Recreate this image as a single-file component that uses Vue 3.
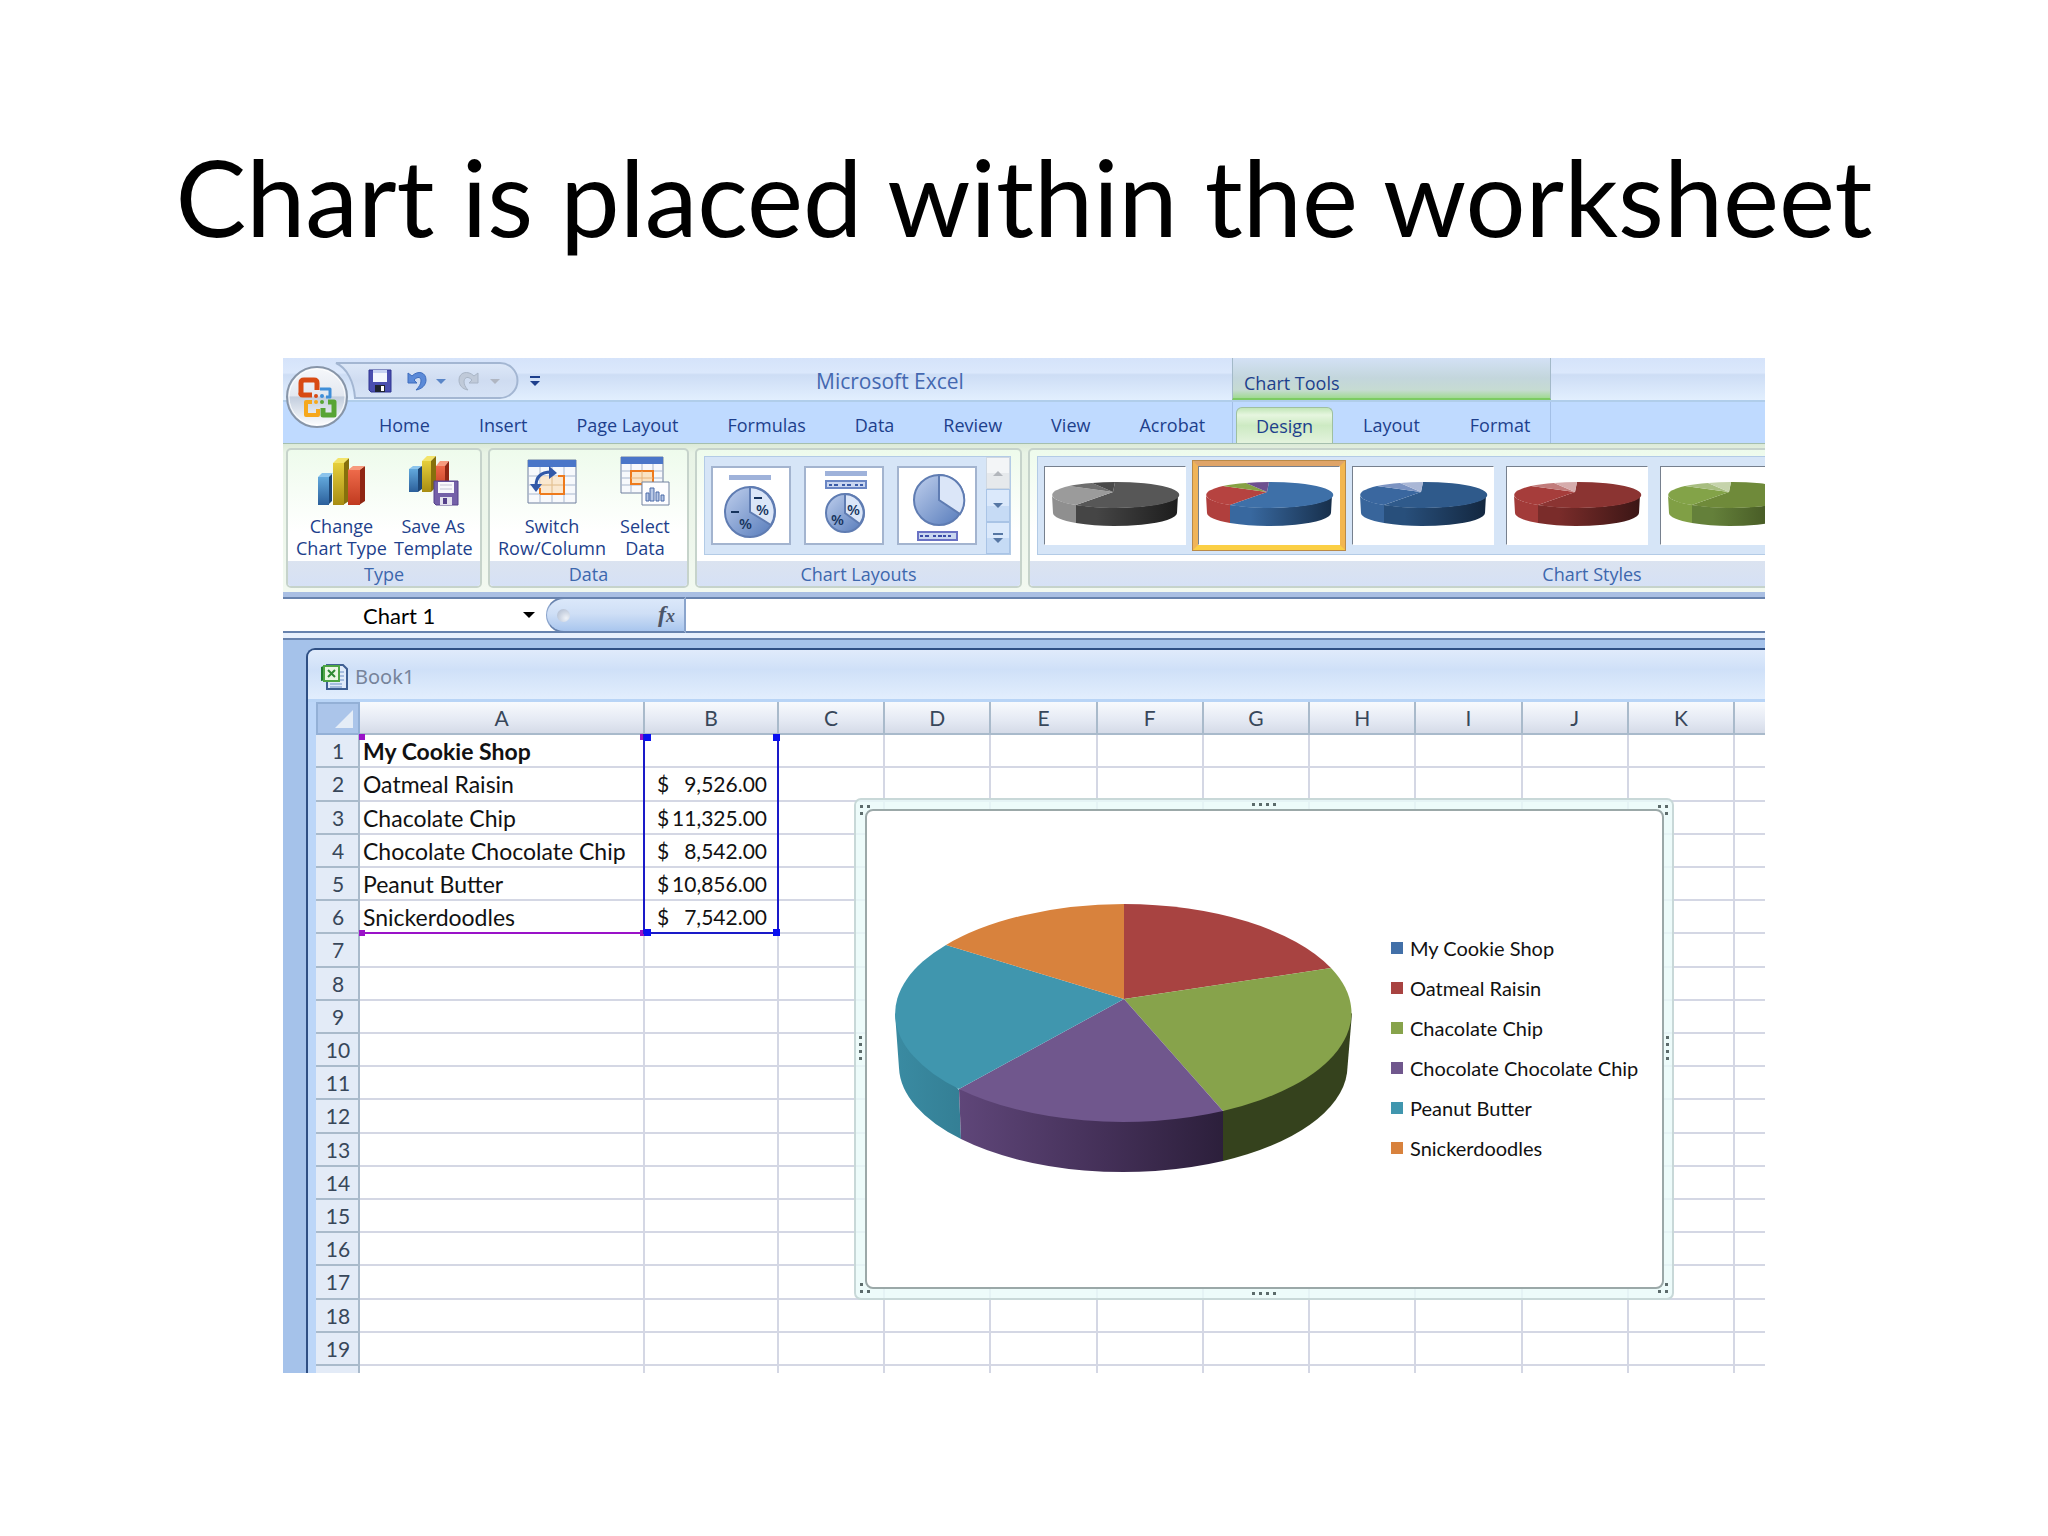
<script setup>
const mainTabs = ['Home', 'Insert', 'Page Layout', 'Formulas', 'Data', 'Review', 'View', 'Acrobat']
const chartTabs = ['Design', 'Layout', 'Format']

const styles = [
  { id: 'gray', faces: ['#575757', '#9b9b9b', '#6e6e6e', '#4a4a4a'], side: ['#454545', '#1d1d1d'], left: '#8f8f8f' },
  { id: 'multi', faces: ['#3e70a8', '#b64340', '#86a144', '#6d4f8f'], side: ['#38689f', '#172f4b'], left: '#b03f3d', selected: true },
  { id: 'blue', faces: ['#2f5a8b', '#3a679f', '#7b93c2', '#aab7d6'], side: ['#284f7b', '#13273f'], left: '#38659b' },
  { id: 'red', faces: ['#8b3432', '#a63d3b', '#c17c7b', '#d6acac'], side: ['#7a2c2a', '#3b1615'], left: '#a23b39' },
  { id: 'green', faces: ['#6f8a3a', '#83a348', '#a7bd80', '#c5d3ab'], side: ['#64803a', '#3a4a1c'], left: '#809f45' },
]

const columns = ['A', 'B', 'C', 'D', 'E', 'F', 'G', 'H', 'I', 'J', 'K', '']
const data = [
  ['My Cookie Shop', ''],
  ['Oatmeal Raisin', '9,526.00'],
  ['Chacolate Chip', '11,325.00'],
  ['Chocolate Chocolate Chip', '8,542.00'],
  ['Peanut Butter', '10,856.00'],
  ['Snickerdoodles', '7,542.00'],
]
const rows = Array.from({ length: 19 }, (_, i) => ({
  n: i + 1,
  label: data[i]?.[0] ?? '',
  amount: data[i]?.[1] ?? '',
}))

const legend = [
  { name: 'My Cookie Shop', color: '#4270a8' },
  { name: 'Oatmeal Raisin', color: '#a84341' },
  { name: 'Chacolate Chip', color: '#87a34b' },
  { name: 'Chocolate Chocolate Chip', color: '#70578d' },
  { name: 'Peanut Butter', color: '#4096ae' },
  { name: 'Snickerdoodles', color: '#d8823d' },
]
</script>

<template>
  <main class="slide">
    <h1>Chart is placed within the worksheet</h1>

    <section class="excel">
      <header class="titlebar">
        <div class="title-left">
          <div class="qat">
            <svg class="qat-shape" width="184" height="37" viewBox="0 0 184 37">
              <defs><linearGradient id="qa" x1="0" y1="0" x2="0" y2="1"><stop offset="0" stop-color="#dde8f8" /><stop offset=".5" stop-color="#cfdcf1" /><stop offset="1" stop-color="#d6e3f6" /></linearGradient></defs>
              <path d="M1 1H165A17 17 0 0 1 165 36H20C19 20 12 6 1 1z" fill="url(#qa)" stroke="#a3b6d2" stroke-width="2" />
            </svg>
            <button aria-label="Save">
              <svg width="24" height="24" viewBox="0 0 24 24"><path d="M1 1h22v22H3l-2-2z" fill="#4a4fb0" stroke="#2f3490" /><path d="M5 1h14v12H5z" fill="#f4f8ff" /><path d="M5 1h14v3H5z" fill="#c8d4f4" /><path d="M7 16h10v7H7z" fill="#1f2430" /><path d="M13 17h3v5h-3z" fill="#fff" /></svg>
            </button>
            <button class="undo" aria-label="Undo">
              <svg width="22" height="22" viewBox="0 0 22 22"><path d="M2 3v10h9L8 10c4-4 7-3 7 1 0 3-2 6-5 9 6-1 10-5 10-10 0-8-8-10-14-4z" fill="#5b8ad8" stroke="#3f6dbd" /></svg>
            </button>
            <i class="tri blue"></i>
            <button class="redo" aria-label="Redo">
              <svg width="22" height="22" viewBox="0 0 22 22"><path d="M20 3v10h-9l3-3c-4-4-7-3-8 1 0 3 1 6 4 9-6-1-9-5-9-10 0-8 9-10 15-4z" fill="#c0cad9" stroke="#a9b5c6" /></svg>
            </button>
            <i class="tri gray"></i>
          </div>
          <button class="customize" aria-label="Customize"><i class="bar"></i><i class="tri navy"></i></button>
          <span class="app-name">Microsoft Excel</span>
        </div>
        <div class="context-title">Chart Tools</div>
        <div></div>
      </header>

      <button class="office" aria-label="Office">
        <svg width="64" height="64" viewBox="0 0 64 64">
          <defs>
            <linearGradient id="orb" x1="0" y1="0" x2="0" y2="1"><stop offset="0" stop-color="#f6f8fb" /><stop offset=".48" stop-color="#e3e8f0" /><stop offset=".5" stop-color="#c3cede" /><stop offset="1" stop-color="#ffffff" /></linearGradient>
          </defs>
          <circle cx="32" cy="33" r="30" fill="url(#orb)" stroke="#8795a8" stroke-width="2" />
          <circle cx="32" cy="33" r="28" fill="none" stroke="#fff" stroke-width="1" opacity=".8" />
          <g fill="none" stroke-linejoin="round">
            <path d="M27 31h-9q-3 0-2-3V19q0-3 3-3h10q3 0 3 3v7" stroke="#d84a13" stroke-width="5" />
            <path d="M35 25h10v8h-4" stroke="#3f8ed8" stroke-width="3" />
            <path d="M27 38h-6v13h12v-6" stroke="#f6a81c" stroke-width="4" />
            <path d="M38 44v7h11V38h-6" stroke="#58a534" stroke-width="5" />
          </g>
          <g><circle cx="31" cy="32" r="2" fill="#d84a13" /><circle cx="37" cy="32" r="2" fill="#3f8ed8" /><circle cx="31" cy="38" r="2" fill="#f6a81c" /><circle cx="37" cy="38" r="2" fill="#58a534" /></g>
        </svg>
      </button>

      <nav class="tabs">
        <div class="tab-set main-tabs"><button v-for="t in mainTabs" :key="t">{{ t }}</button></div>
        <div class="tab-set chart-tabs"><button v-for="t in chartTabs" :key="t" :class="{ active: t === 'Design' }">{{ t }}</button></div>
        <div></div>
      </nav>

      <div class="ribbon">
        <div class="group type">
          <div class="tools">
            <button class="tool">
              <svg width="50" height="50" viewBox="0 0 50 50">
                <defs>
                  <linearGradient id="bb" x1="0" x2="0" y1="0" y2="1"><stop offset="0" stop-color="#62a8dc" /><stop offset="1" stop-color="#2b5f9a" /></linearGradient>
                  <linearGradient id="by" x1="0" x2="0" y1="0" y2="1"><stop offset="0" stop-color="#e6cf3c" /><stop offset="1" stop-color="#a88d12" /></linearGradient>
                  <linearGradient id="br" x1="0" x2="0" y1="0" y2="1"><stop offset="0" stop-color="#ee6a4a" /><stop offset="1" stop-color="#c03a1f" /></linearGradient>
                </defs>
                <path d="M12 21l4-4V45l-4 4z" fill="#1d4675" /><path d="M2 21h11v28H2z" fill="url(#bb)" /><path d="M2 21l4-4h11l-4 4z" fill="#8cc4ec" />
                <path d="M27 7l6-5v43l-6 4z" fill="#86700c" /><path d="M17 7h11v42H17z" fill="url(#by)" /><path d="M17 7l5-5h11l-5 5z" fill="#f3e46a" />
                <path d="M43 14l6-4v35l-6 4z" fill="#8f2613" /><path d="M32 14h12v35H32z" fill="url(#br)" /><path d="M32 14l5-4h12l-5 4z" fill="#f79a7d" />
              </svg>
              <span>Change<br />Chart Type</span>
            </button>
            <button class="tool">
              <svg width="52" height="50" viewBox="0 0 52 50">
                <path d="M2 13h9v23H2z" fill="url(#bb)" /><path d="M2 13l4-3h9l-4 3z" fill="#8cc4ec" /><path d="M11 13l4-3v23l-4 3z" fill="#1d4675" />
                <path d="M15 5h9v31h-9z" fill="url(#by)" /><path d="M15 5l5-5h9l-5 5z" fill="#f3e46a" /><path d="M24 5l5-5v31l-5 5z" fill="#86700c" />
                <path d="M29 10h9v26h-9z" fill="url(#br)" /><path d="M29 10l4-5h9l-4 5z" fill="#f79a7d" /><path d="M38 10l4-5v26l-4 5z" fill="#8f2613" />
                <path d="M27 25h24v24H29l-2-2z" fill="#7460a8" stroke="#55418a" /><path d="M31 26h16v11H31z" fill="#f8f8fc" /><path d="M33 29h12M33 33h12" stroke="#c4c4d4" /><path d="M33 41h12v8H33z" fill="#e4e2ee" /><path d="M36 42h4v6h-4z" fill="#55418a" />
              </svg>
              <span>Save As<br />Template</span>
            </button>
          </div>
          <footer>Type</footer>
        </div>

        <div class="group data">
          <div class="tools">
            <button class="tool">
              <svg width="50" height="50" viewBox="0 0 50 50">
                <path d="M1 4h48v43H1z" fill="#f7f9fc" stroke="#6e7f9e" /><path d="M1 4h48v7H1z" fill="#4a76c8" />
                <path d="M1 20h48M1 29h48M1 38h48M13 11v36M25 11v36M37 11v36" stroke="#a9b7cd" />
                <path d="M13 20h24v18H13z" fill="#fae3c4" opacity=".8" /><path d="M25 20v18M13 29h24" stroke="#e6c08c" /><path d="M13 38V32M13 38h24V20h-6" fill="none" stroke="#ee7a1c" stroke-width="2" />
                <path d="M9 30c0-9 5-14 15-14" fill="none" stroke="#3158a8" stroke-width="3" /><path d="M22 10l8 7-8 6zM3 28h12l-6 8z" fill="#3158a8" />
              </svg>
              <span>Switch<br />Row/Column</span>
            </button>
            <button class="tool">
              <svg width="50" height="50" viewBox="0 0 50 50">
                <path d="M1 1h42v36H1z" fill="#f7f9fc" stroke="#6e7f9e" /><path d="M1 1h42v7H1z" fill="#4a76c8" />
                <path d="M1 15h42M1 22h42M1 29h42M11 8v29M22 8v29M33 8v29" stroke="#a9b7cd" />
                <path d="M11 15h22v13H11z" fill="#fae3c4" stroke="#ee7a1c" stroke-width="2" /><path d="M22 15v13M11 22h22" stroke="#e6b27a" />
                <path d="M22 26h27v23H22z" fill="#fdfdff" stroke="#7383a0" /><path d="M26 45v-8h3v8zM30 45V32h4v13zM36 45v-9h3v9zM41 45v-6h3v6z" fill="#b8c8e6" stroke="#4a6aa8" />
              </svg>
              <span>Select<br />Data</span>
            </button>
          </div>
          <footer>Data</footer>
        </div>

        <div class="group layouts">
          <div class="gallery">
            <svg width="0" height="0" class="defs"><defs><linearGradient id="lp" x1="0" y1="0" x2="1" y2="1"><stop offset=".1" stop-color="#b5c7e8" /><stop offset=".9" stop-color="#5f82bf" /></linearGradient></defs></svg>
            <button class="layout-thumb" aria-label="Layout 1">
              <svg viewBox="2 2 76 75">
                <path d="M18 9h42v5H18z" fill="#9fb2da" />
                <circle cx="39" cy="46" r="25" fill="url(#lp)" stroke="#5f7cb2" stroke-width="2" /><path d="M39 46V21A25 25 0 0 1 60 59z" fill="#dbe6f8" stroke="#5f7cb2" stroke-width="2" />
                <path d="M43 32h8M20 46h8" stroke="#16335c" stroke-width="2" /><text x="45" y="49" font-size="15">%</text><text x="28" y="63" font-size="15">%</text>
              </svg>
            </button>
            <button class="layout-thumb" aria-label="Layout 2">
              <svg viewBox="2 2 76 75">
                <path d="M21 5h42v5H21z" fill="#9fb2da" /><path d="M22 15h40v7H22z" fill="#c9d6f0" stroke="#6a86c4" stroke-width="2" /><path d="M25 19h3m2 0h4m4 0h3m2 0h4m4 0h3m2 0h3" stroke="#3b5ca8" stroke-width="2" />
                <circle cx="41" cy="47" r="19" fill="url(#lp)" stroke="#5f7cb2" stroke-width="2" /><path d="M41 47V28A19 19 0 0 1 56 58z" fill="#dbe6f8" stroke="#5f7cb2" stroke-width="2" />
                <text x="43" y="49" font-size="15">%</text><text x="27" y="59" font-size="15">%</text>
              </svg>
            </button>
            <button class="layout-thumb" aria-label="Layout 3">
              <svg viewBox="2 2 76 75">
                <circle cx="42" cy="34" r="25" fill="url(#lp)" stroke="#5f7cb2" stroke-width="2" /><path d="M42 34V9A25 25 0 0 1 63 48z" fill="#dbe6f8" stroke="#5f7cb2" stroke-width="2" />
                <path d="M21 66h39v8H21z" fill="#c9d6f0" stroke="#6a72c4" stroke-width="2" /><path d="M23 70h3m2 0h4m4 0h3m2 0h4m1 0h3m2 0h3" stroke="#3b4ca8" stroke-width="2" />
              </svg>
            </button>
            <div class="scroller">
              <button class="off" aria-label="Previous"><i class="tri up"></i></button>
              <button aria-label="Next"><i class="tri steel"></i></button>
              <button aria-label="More"><i class="bar"></i><i class="tri steel"></i></button>
            </div>
          </div>
          <footer>Chart Layouts</footer>
        </div>

        <div class="group styles">
          <div class="gallery">
            <button v-for="s in styles" :key="s.id" class="style-thumb" :class="{ selected: s.selected }" :aria-label="'Style ' + s.id">
              <svg viewBox="0 0 140 77">
                <defs><linearGradient :id="'side-' + s.id"><stop offset=".2" :stop-color="s.side[0]" /><stop offset="1" :stop-color="s.side[1]" /></linearGradient></defs>
                <path d="M7 28A63 13 0 0 0 31 38V56A62 13 0 0 1 8 46z" :fill="s.left" />
                <path d="M31 38A63 13 0 0 0 133 28L132 46A62 13 0 0 1 31 56z" :fill="'url(#side-' + s.id + ')'" />
                <path d="M68 25L70 15A63 13 0 1 1 31 38z" :fill="s.faces[0]" />
                <path d="M68 25L31 38A63 13 0 0 1 24 19z" :fill="s.faces[1]" />
                <path d="M68 25L24 19A63 13 0 0 1 47 16z" :fill="s.faces[2]" />
                <path d="M68 25L47 16A63 13 0 0 1 70 15z" :fill="s.faces[3]" />
              </svg>
            </button>
          </div>
          <footer>Chart Styles</footer>
        </div>
      </div>

      <div class="formula-bar">
        <input class="name-box" value="Chart 1" aria-label="Name box" />
        <button class="name-arrow" aria-label="Names"><i class="tri black"></i></button>
        <div class="fx"><i class="knob"></i><button aria-label="Insert function"><em>f</em><em class="x">x</em></button></div>
        <input class="formula" aria-label="Formula" />
      </div>

      <div class="workspace">
        <div class="book">
          <div class="book-title">
            <svg width="28" height="26" viewBox="0 0 28 26">
              <path d="M7 1h16l4 4v20H7z" fill="#dfeafa" stroke="#3f5f93" stroke-width="2" /><path d="M10 20h12M10 23h12M20 8h4M20 12h4M20 16h4" stroke="#6d8fc6" />
              <path d="M1 3l5-2v15l-5 1z" fill="#1f7a2c" /><path d="M4 2h15v15H4z" fill="#eaf6e4" stroke="#4ea545" stroke-width="2" /><path d="M8 6l7 7M15 6l-7 7" stroke="#2f8a34" stroke-width="2" />
            </svg>
            <span>Book1</span>
          </div>

          <div class="sheet">
            <table>
              <colgroup><col class="c-row" /><col class="c-a" /><col class="c-b" /><col v-for="n in 9" :key="n" /><col class="c-end" /></colgroup>
              <thead>
                <tr><th class="corner"><i></i></th><th v-for="(c, i) in columns" :key="i">{{ c }}</th></tr>
              </thead>
              <tbody>
                <tr v-for="r in rows" :key="r.n">
                  <th>{{ r.n }}</th>
                  <td class="label" :class="{ bold: r.n === 1 }">{{ r.label }}</td>
                  <td><div v-if="r.amount" class="money"><span>$</span><span>{{ r.amount }}</span></div></td>
                  <td v-for="n in 10" :key="n"></td>
                </tr>
                <tr class="partial"><th></th><td v-for="n in 12" :key="n"></td></tr>
              </tbody>
            </table>

            <div class="range labels"><i></i><i></i><i></i><i></i></div>
            <div class="range values"><i></i><i></i><i></i><i></i></div>

            <div class="chart-frame">
              <i class="dots h top"></i><i class="dots h bottom"></i><i class="dots v left"></i><i class="dots v right"></i>
              <i class="corner-dots tl"></i><i class="corner-dots tr"></i><i class="corner-dots bl"></i><i class="corner-dots br"></i>
              <div class="chart">
                <svg class="pie" viewBox="0 0 460 272">
                  <defs>
                    <linearGradient id="sideP"><stop offset="0" stop-color="#5f4679" /><stop offset=".55" stop-color="#443058" /><stop offset="1" stop-color="#2c1f3b" /></linearGradient>
                    <linearGradient id="sideT"><stop offset="0" stop-color="#3a8ba2" /><stop offset="1" stop-color="#347f95" /></linearGradient>
                  </defs>
                  <path d="M1 110L5 165A224 106 0 0 0 67 236L65 187z" fill="url(#sideT)" />
                  <path d="M65 186L67 236A224 106 0 0 0 329 258V208z" fill="url(#sideP)" />
                  <path d="M329 208V258A224 106 0 0 0 453 170L458 110z" fill="#35421d" />
                  <path d="M230 96V1A229 109 0 0 1 437 65z" fill="#a84341" />
                  <path d="M230 96L437 65A229 109 0 0 1 329 208z" fill="#87a34b" />
                  <path d="M230 96L329 208A229 109 0 0 1 65 186z" fill="#70578d" />
                  <path d="M230 96L65 186A229 109 0 0 1 52 42z" fill="#4096ae" />
                  <path d="M230 96L52 42A229 109 0 0 1 230 1z" fill="#d8823d" />
                </svg>
                <ul class="legend">
                  <li v-for="l in legend" :key="l.name"><i :style="{ background: l.color }"></i>{{ l.name }}</li>
                </ul>
              </div>
            </div>
          </div>
        </div>
      </div>
    </section>
  </main>
</template>

<style>
body { margin: 0; background: #fff; }
</style>

<style scoped>
* { box-sizing: border-box; }
button, input { font: inherit; color: inherit; background: none; border: 0; padding: 0; margin: 0; }
svg { display: block; }

.slide { padding: 0 283px; font-family: Lato, Carlito, Calibri, sans-serif; color: #000; }
h1 { margin: 0 -200px; padding: 130px 0 96px; font-size: 106px; line-height: 132px; font-weight: 400; text-align: center; white-space: nowrap; }

.excel { position: relative; overflow: hidden; font-family: "Open Sans", "Noto Sans", sans-serif; font-size: 18px; color: #1d3f8c; }
.titlebar, .tabs { display: grid; grid-template-columns: 949px 319px 1fr; }
.titlebar { height: 44px; background: linear-gradient(#d5e3fa, #dbe8fc 35%, #cdddf5 40%, #e2effe); border-bottom: 2px solid #b0cdea; }
.title-left { display: flex; align-items: center; padding: 4px 0 0 60px; }
.qat { position: relative; display: flex; align-items: center; width: 176px; height: 36px; padding-left: 25px; }
.qat > * { position: relative; }
.qat > .qat-shape { position: absolute; left: -8px; top: -1px; }
.undo { margin-left: 14px; }
.redo { margin-left: 12px; }
.tri { display: block; width: 0; height: 0; border: 5px solid transparent; border-bottom: 0; border-top-color: #1d3f8c; }
.tri.blue { margin-left: 8px; border-top-color: #5a86c8; }
.tri.gray { margin-left: 10px; border-top-color: #b0b6c2; }
.tri.up { border: 5px solid transparent; border-top: 0; border-bottom-color: #b2b6bc; }
.tri.steel { border-top-color: #5677a4; }
.tri.black { border-width: 6px 6px 0; border-top-color: #000; }
.bar { display: block; width: 10px; height: 2px; margin-bottom: 3px; background: currentColor; }
.customize { margin-left: 11px; color: #1d3f8c; }
.app-name { margin-left: 276px; font-size: 21px; line-height: 28px; color: #4468b0; }
.context-title { display: flex; align-items: center; padding: 10px 0 0 11px; border: 1px solid #a3b9c8; border-width: 0 1px; border-bottom: 2px solid #7ccb62; background: linear-gradient(#d3e1f5, #c3d6dc 50%, #c6dbd2 80%, #a0da92); line-height: 24px; }

.office { position: absolute; left: 2px; top: 6px; z-index: 1; }

.tabs { height: 42px; background: #bfdaff; border-bottom: 1px solid #a5bfae; }
.tab-set { display: flex; align-items: flex-end; }
.tab-set button { height: 36px; padding: 0 24px; line-height: 36px; white-space: nowrap; }
.main-tabs { gap: 1px; padding-left: 72px; }
.chart-tabs { gap: 10px; padding-left: 3px; border: solid #a3bfe6; border-width: 0 1px; }
.chart-tabs button { padding: 0 20px; }
.chart-tabs .active { padding: 0 19px; border: 1px solid #9fc09f; border-bottom: 0; border-radius: 6px 6px 0 0; background: linear-gradient(#c2e6b8, #e6f6df 20%, #cdeac3 50%, #e3f3dd); }

.ribbon { display: flex; gap: 6px; height: 148px; padding: 4px 0 4px 3px; background: linear-gradient(#dcead8, #e8f3e5 6%, #f2f9f0); }
.group { display: flex; flex-direction: column; flex: none; border: 2px solid #c6d3cb; border-radius: 5px; background: linear-gradient(#eefbec, #fff 60%); overflow: hidden; }
.group footer { height: 25px; line-height: 26px; margin-top: auto; text-align: center; color: #3d67ad; background: linear-gradient(#dbe3f0, #d6e1f5); }
.type { width: 196px; }
.data { width: 201px; }
.layouts { width: 327px; }
.styles { width: 1128px; }
.tools { display: flex; gap: 7px; padding: 6px 0 0 8px; }
.data .tools { gap: 14px; }
.tool { display: flex; flex-direction: column; align-items: center; gap: 9px; line-height: 22px; white-space: nowrap; }
.gallery { display: flex; margin: 6px 9px 0 7px; height: 99px; padding: 3px 0; border: 1px solid #b3cbe6; background: #d6e5f7; }
.styles .gallery { margin-right: 0; }
.layout-thumb, .style-thumb { flex: none; height: 91px; border: 6px solid transparent; }
.layout-thumb { width: 93px; }
.layout-thumb svg { width: 80px; height: 79px; border: 2px solid #a3b4cf; background: #fff; }
.layout-thumb text { fill: #16335c; font-weight: 600; }
.style-thumb { width: 154px; }
.style-thumb svg { width: 142px; height: 79px; border: 1px solid #fff; border-top-color: #76808e; border-left-color: #76808e; background: #fff; }
.style-thumb.selected { border-color: #dfa468 #f2b650 #fbcf45 #f0b458; outline: 1px solid #b98a48; outline-offset: -1px; }
.scroller { display: flex; flex-direction: column; width: 24px; margin: -3px 0 -3px auto; }
.scroller button { display: flex; flex: 1; flex-direction: column; align-items: center; justify-content: center; border: 1px solid #a9c4e6; background: linear-gradient(#dbe9fb 50%, #c6dbf5 50%); color: #5677a4; }
.scroller .off { border-color: #cfd8e2; background: linear-gradient(#f3f5f7 50%, #e6e9ec 50%); }
.defs { position: absolute; }

.formula-bar { display: flex; height: 48px; border-top: 5px solid #a9bfe3; border-bottom: 2px solid #6883ae; padding: 0 0 5px; background: #e9f1fd; font-family: Lato, Carlito, sans-serif; font-size: 22px; color: #000; }
.formula-bar > * { border-top: 2px solid #6883ae; border-bottom: 2px solid #6883ae; background: #fff; }
.name-box { width: 236px; padding: 0 0 0 80px; }
.name-arrow { width: 45px; padding-left: 4px; margin-right: -18px; }
.fx { position: relative; display: flex; align-items: center; justify-content: space-between; width: 140px; padding: 0 9px 0 10px; border-left: 1px solid #8aa4cc; border-right: 2px solid #8aa4cc; border-radius: 18px 0 0 18px; background: linear-gradient(#dbe8fa, #cfdff6 45%, #a9c6ee); font-family: "Liberation Serif", serif; font-weight: 700; font-size: 24px; line-height: 28px; color: #4c5568; }
.knob { width: 13px; height: 13px; border-radius: 50%; background: radial-gradient(circle at 70% 70%, #eef2f8, #a9b6cc); }
.x { font-size: 18px; }
.formula { flex: 1; }

.workspace { padding: 8px 0 0 23px; background: #a5c2ea; }
.book { border: 2px solid #2f4f84; border-right: 0; border-bottom: 0; border-top-left-radius: 9px; background: #bcd6f8; overflow: hidden; }
.book-title { display: flex; align-items: center; gap: 7px; height: 52px; padding: 4px 0 0 12px; border-bottom: 3px solid #b8d4f6; background: linear-gradient(#e0ebfb, #cfe0f8 40%, #e2eefd); font-family: "Noto Sans", sans-serif; font-size: 20px; color: #76839a; }
.sheet { position: relative; margin-left: 8px; background: #fff; }

table { width: 100%; table-layout: fixed; border-collapse: separate; border-spacing: 0; font-family: Lato, Carlito, sans-serif; font-size: 21px; color: #111; }
.c-row { width: 44px; }
.c-a { width: 285px; }
.c-b { width: 134px; }
.c-end { width: 30px; }
th, td { height: 33px; padding: 0; line-height: 30px; border: solid #d4d7e4; border-width: 0 2px 2px 0; white-space: nowrap; }
tr > :last-child { border-right: 0; }
td { padding-left: 3px; }
.label { font-size: 23px; }
tr:nth-child(5n + 2) > * { height: 34px; }
.partial > * { height: 7px; border-bottom: 0; }
th { font-weight: 400; color: #38475a; border-color: #a9bacb; }
tbody th { background: #e3ebf7; text-align: center; padding-left: 2px; }
thead th { height: 33px; background: linear-gradient(#f8fafd, #e4e9f3 60%, #d5dbe8); }
.corner { background: #abc5ea; }
thead .corner { border: 2px solid #93b0d6; background: #abc5ea; }
.corner i { display: block; width: 0; height: 0; margin-left: auto; margin-right: 5px; border: 9px solid transparent; border-bottom-color: #e5edf7; border-right-color: #e5edf7; }
.bold { font-weight: 700; }
.money { display: flex; justify-content: space-between; padding: 0 10px 0 9px; }

.range { position: absolute; pointer-events: none; top: 32px; height: 200px; }
.range i { position: absolute; width: 6px; height: 6px; background: currentColor; }
.range i:nth-child(1) { left: -1px; top: 0; }
.range i:nth-child(2) { right: -3px; top: 0; }
.range i:nth-child(3) { left: -1px; bottom: -4px; }
.range i:nth-child(4) { right: -3px; bottom: -4px; }
.labels { left: 44px; width: 283px; color: #9a12c8; border-bottom: 2px solid; }
.values { left: 327px; width: 136px; color: #0a10f0; border: 2px solid #1a1ac8; border-top: 0; }
.values i { width: 7px; height: 7px; }

.chart-frame { position: absolute; left: 538px; top: 96px; width: 820px; height: 502px; padding: 9px 8px 9px 9px; border: 2px solid #c8d8d8; border-radius: 7px; background: #e9faf9cc; }
.chart { display: flex; align-items: flex-start; height: 100%; border: 2px solid #9ba8a8; border-radius: 8px; background: #fff; }
.pie { width: 460px; height: 272px; margin: 92px 0 0 27px; flex: none; }
.legend { list-style: none; margin: 117px 0 0 37px; padding: 0; font-size: 20px; line-height: 40px; font-family: Lato, Carlito, sans-serif; color: #111; white-space: nowrap; }
.legend li { display: flex; align-items: center; gap: 7px; }
.legend i { width: 12px; height: 12px; }
.dots, .corner-dots { position: absolute; }
.dots.h { left: 396px; width: 24px; height: 3px; background: repeating-linear-gradient(90deg, #5c6b6b 0 3px, transparent 3px 7px); }
.dots.v { top: 236px; width: 3px; height: 24px; background: repeating-linear-gradient(#5c6b6b 0 3px, transparent 3px 7px); }
.top { top: 3px; }
.bottom { bottom: 3px; }
.left { left: 3px; }
.right { right: 3px; }
.corner-dots { width: 3px; height: 3px; background: #5c6b6b; }
.tl { left: 4px; top: 5px; box-shadow: 7px 0 #5c6b6b, 0 7px #5c6b6b; }
.tr { right: 4px; top: 5px; box-shadow: -7px 0 #5c6b6b, 0 7px #5c6b6b; }
.bl { left: 4px; bottom: 5px; box-shadow: 7px 0 #5c6b6b, 0 -7px #5c6b6b; }
.br { right: 4px; bottom: 5px; box-shadow: -7px 0 #5c6b6b, 0 -7px #5c6b6b; }
</style>
